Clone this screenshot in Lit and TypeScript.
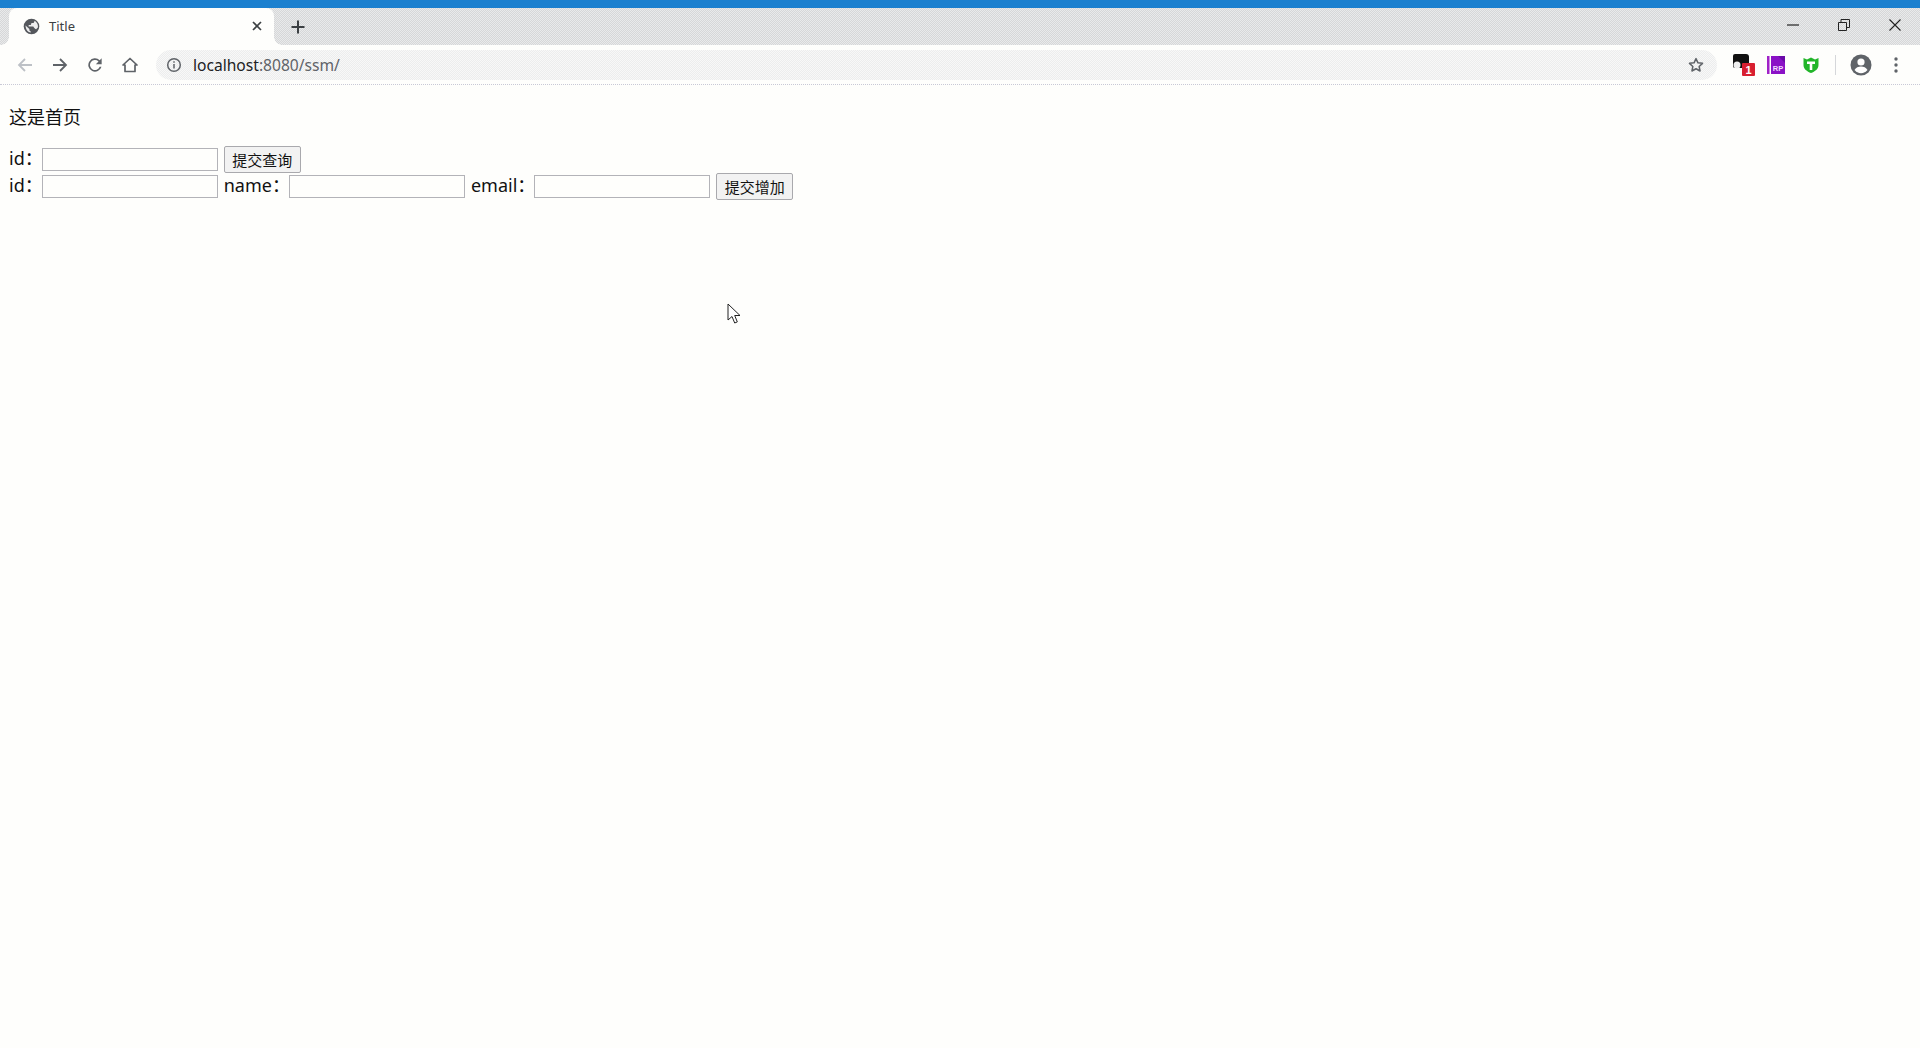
import { LitElement, html, css } from "lit";
import { customElement } from "lit/decorators.js";

@customElement("app-root")
export class AppRoot extends LitElement {
  static styles = css`
    :host {
      display: block; height: 1048px; position: relative; overflow: hidden;
      background-color: #fefefc;
      font-family: "Noto Sans", "Noto Sans CJK SC", sans-serif; color: #111;
    }
    .accent { height: 8px; background: #1b80cf; }
    .strip { height: 37px; background: repeating-conic-gradient(#d6d7d8 0 25%, #e9eaeb 0 50%) 0 0 / 2px 2px; display: flex; align-items: stretch; }
    .tab { position: relative; width: 265px; margin-left: 9px; background: #fefefc; border-radius: 8px 8px 0 0; display: flex; align-items: center; padding: 0 11px 1px 14px; box-sizing: border-box; gap: 9px; }
    .tab::before, .tab::after { content: ""; position: absolute; bottom: 0; width: 8px; height: 8px; }
    .tab::before { left: -8px; background: radial-gradient(circle at 0 0, transparent 7.5px, #fefefc 8px); }
    .tab::after { right: -8px; background: radial-gradient(circle at 100% 0, transparent 7.5px, #fefefc 8px); }
    .tab-title { flex: 1; font-size: 13px; color: #3c4043; }
    .newtab { margin-left: 12px; width: 24px; display: flex; align-items: center; justify-content: center; }
    .spacer { flex: 1; }
    .win { width: 51px; display: flex; align-items: center; justify-content: center; padding-bottom: 4px; box-sizing: border-box; }
    .winctl { display: flex; }
    .toolbar { height: 39px; border-bottom: 1px dotted #c9c9d6; display: flex; align-items: center; padding: 0 7px; }
    .btn { width: 35px; height: 30px; flex: none; display: flex; align-items: center; justify-content: center; box-sizing: border-box; }
    .nudge { padding-left: 6px; }
    .omni { flex: 1; height: 30px; margin: 0 6px 0 9px; background: repeating-conic-gradient(#eceded 0 25%, #f8f8f8 0 50%) 0 0 / 2px 2px; border-radius: 15px; display: flex; align-items: center; padding: 0 12px 0 10px; gap: 11px; }
    .url { flex: 1; font-size: 15.600px; color: #5f6368; }
    .url b { font-weight: 400; color: #202124; }
    .divider { width: 1px; height: 20px; background: #d5d7da; margin: 0 7px; flex: none; }
    .page { padding: 20px 9px 0; font-size: 18px; line-height: 24px; color: #111; }
    .head { margin: 0 0 19px; font-weight: 400; font-size: 18px; line-height: 24px; }
    .rows { display: flex; flex-direction: column; gap: 5px; }
    .row { display: flex; align-items: center; height: 22px; white-space: nowrap; }
    .row label { margin-right: -1px; position: relative; top: -1px; }
    .row .after { margin-left: 6px; }
    .f { width: 176px; height: 23px; box-sizing: border-box; border: 1px solid #b3b3b8; background: #fefefc; padding: 0; margin: 0; flex: none; }
    .s { height: 27px; margin-left: 6px; padding: 0 7.500px; box-sizing: border-box; border: 1px solid #a9a9ad; background: #f2f2f2; border-radius: 2px; font-family: "Noto Sans CJK SC", sans-serif; font-size: 15px; color: #111; line-height: 1; flex: none; }
    .cursor { position: absolute; left: 727px; top: 303px; }
  `;

  render() {
    return html`
      <div class="accent"></div>
      <div class="strip">
        <div class="tab">
          <svg width="17" height="17" viewBox="0 0 24 24"><circle cx="12" cy="12" r="11" fill="#54575c"/><path fill="#fefefe" d="M3.500 10.500L9 15.500v1.500a2 2 0 0 0 2 2v1.500c-3.500-.5-7-3.500-7.500-10zM8 10h3l1-3h3l1.500-3 2 1.500c2 2 3 5 2.500 8l-2.500 2.500-1.500-1-1.500-1.500-1-1.500H8z" opacity=".9"/></svg>
          <span class="tab-title">Title</span>
          <svg width="12" height="12" viewBox="0 0 12 12"><path d="M2 2l8 8M10 2l-8 8" stroke="#3c4043" stroke-width="1.700" fill="none"/></svg>
        </div>
        <div class="newtab"><svg width="14" height="14" viewBox="0 0 14 14"><path d="M7 .5v13M.5 7h13" stroke="#3c4043" stroke-width="2" fill="none"/></svg></div>
        <div class="spacer"></div>
        <div class="winctl">
          <div class="win"><svg width="12" height="2" viewBox="0 0 12 2"><path d="M0 1h12" stroke="#222" stroke-width="1.200"/></svg></div>
          <div class="win"><svg width="12" height="12" viewBox="0 0 12 12"><path d="M.5 3.500h8v8h-8zM3 3.500V.5h8.500v8H8.500" fill="none" stroke="#222"/></svg></div>
          <div class="win"><svg width="12" height="12" viewBox="0 0 12 12"><path d="M.5.5l11 11M11.500.5l-11 11" fill="none" stroke="#222" stroke-width="1.100"/></svg></div>
        </div>
      </div>
      <div class="toolbar">
        <div class="btn"><svg width="16" height="16" viewBox="0 0 16 16"><path d="M15 8H2M8 2L2 8l6 6" fill="none" stroke="#bdc1c6" stroke-width="1.800"/></svg></div>
        <div class="btn"><svg width="16" height="16" viewBox="0 0 16 16"><path d="M1 8h13M8 2l6 6-6 6" fill="none" stroke="#5f6368" stroke-width="1.800"/></svg></div>
        <div class="btn"><svg width="20" height="20" viewBox="0 0 24 24"><path fill="#5f6368" d="M17.650 6.350A8 8 0 1 0 19.730 14h-2.080a6 6 0 1 1-1.410-6.240L13 11h7V4l-2.350 2.350z"/></svg></div>
        <div class="btn"><svg width="16" height="16" viewBox="0 0 16 16"><path d="M8 1.500L1 8h2v6.500h10V8h2z" fill="none" stroke="#5f6368" stroke-width="1.700" stroke-linejoin="round"/></svg></div>
        <div class="omni">
          <svg width="16" height="16" viewBox="0 0 16 16"><circle cx="8" cy="8" r="6.300" fill="none" stroke="#5f6368" stroke-width="1.500"/><path d="M8 7v4.500M8 4.300v1.500" stroke="#5f6368" stroke-width="1.500"/></svg>
          <span class="url"><b>localhost</b>:8080/ssm/</span>
          <svg width="18" height="18" viewBox="0 0 24 24"><path fill="none" stroke="#5f6368" stroke-width="2" stroke-linejoin="round" d="M12 3.500l2.600 5.600 6.100.7-4.500 4.200 1.200 6L12 17l-5.400 3 1.200-6-4.500-4.200 6.100-.7z"/></svg>
        </div>
        <div class="btn nudge"><svg width="24" height="24" viewBox="0 0 24 24"><path fill="#111" d="M3 1h11a3 3 0 0 1 3 3v11H3a2 2 0 0 1-2-2V3a2 2 0 0 1 2-2z"/><circle cx="5" cy="12" r="3.500" fill="#eee"/><rect x="10" y="10" width="13" height="13" rx="1" fill="#d81f30"/><text x="16.500" y="21" font-size="11" font-weight="700" fill="#fff" text-anchor="middle" font-family="Liberation Sans">1</text></svg></div>
        <div class="btn"><svg width="20" height="20" viewBox="0 0 20 20"><rect x="1" y="1" width="2.500" height="18" fill="#a022c8"/><rect x="5" y="1" width="14" height="18" fill="#8a12c6"/><path d="M12 1h7v7z" fill="#6a0aa8"/><text x="12" y="16" font-size="7.500" font-weight="700" fill="#f3dcff" text-anchor="middle" font-family="Liberation Sans">RP</text></svg></div>
        <div class="btn"><svg width="18" height="18" viewBox="0 0 18 18"><path d="M1.500 2L5 3.500 9 1.500l4 2L16.500 2v7c0 4-3.500 6.500-7.500 8-4-1.500-7.500-4-7.500-8z" fill="#22b52a"/><path d="M5 5.500h8v2.500h-2.700v6H7.700V8H5z" fill="#fff"/></svg></div>
        <div class="divider"></div>
        <div class="btn"><svg width="22" height="22" viewBox="0 0 22 22"><circle cx="11" cy="11" r="10.500" fill="#5f6368"/><circle cx="11" cy="8" r="3.600" fill="#fefefe"/><path d="M4.500 16c1.200-2.600 4-3.600 6.500-3.600s5.300 1 6.500 3.600a8.200 8.200 0 0 1-13 0z" fill="#fefefe"/></svg></div>
        <div class="btn"><svg width="4" height="16" viewBox="0 0 4 16"><circle cx="2" cy="2" r="1.700" fill="#5f6368"/><circle cx="2" cy="8" r="1.700" fill="#5f6368"/><circle cx="2" cy="14" r="1.700" fill="#5f6368"/></svg></div>
      </div>
      <div class="page">
        <h1 class="head">这是首页</h1>
        <div class="rows">
          <form class="row" @submit=${(e: Event) => e.preventDefault()}>
            <label>id：</label><input class="f" type="text" /><button class="s">提交查询</button>
          </form>
          <form class="row" @submit=${(e: Event) => e.preventDefault()}>
            <label>id：</label><input class="f" type="text" />
            <label class="after">name：</label><input class="f" type="text" />
            <label class="after">email：</label><input class="f" type="text" /><button class="s">提交增加</button>
          </form>
        </div>
      </div>
      <svg class="cursor" width="16" height="22" viewBox="0 0 16 22"><path d="M1 1v16l4-3.500 2.700 6.500 2.600-1.100L7.700 12.500H13z" fill="#fff" stroke="#222" stroke-width="1"/></svg>
    `;
  }
}
